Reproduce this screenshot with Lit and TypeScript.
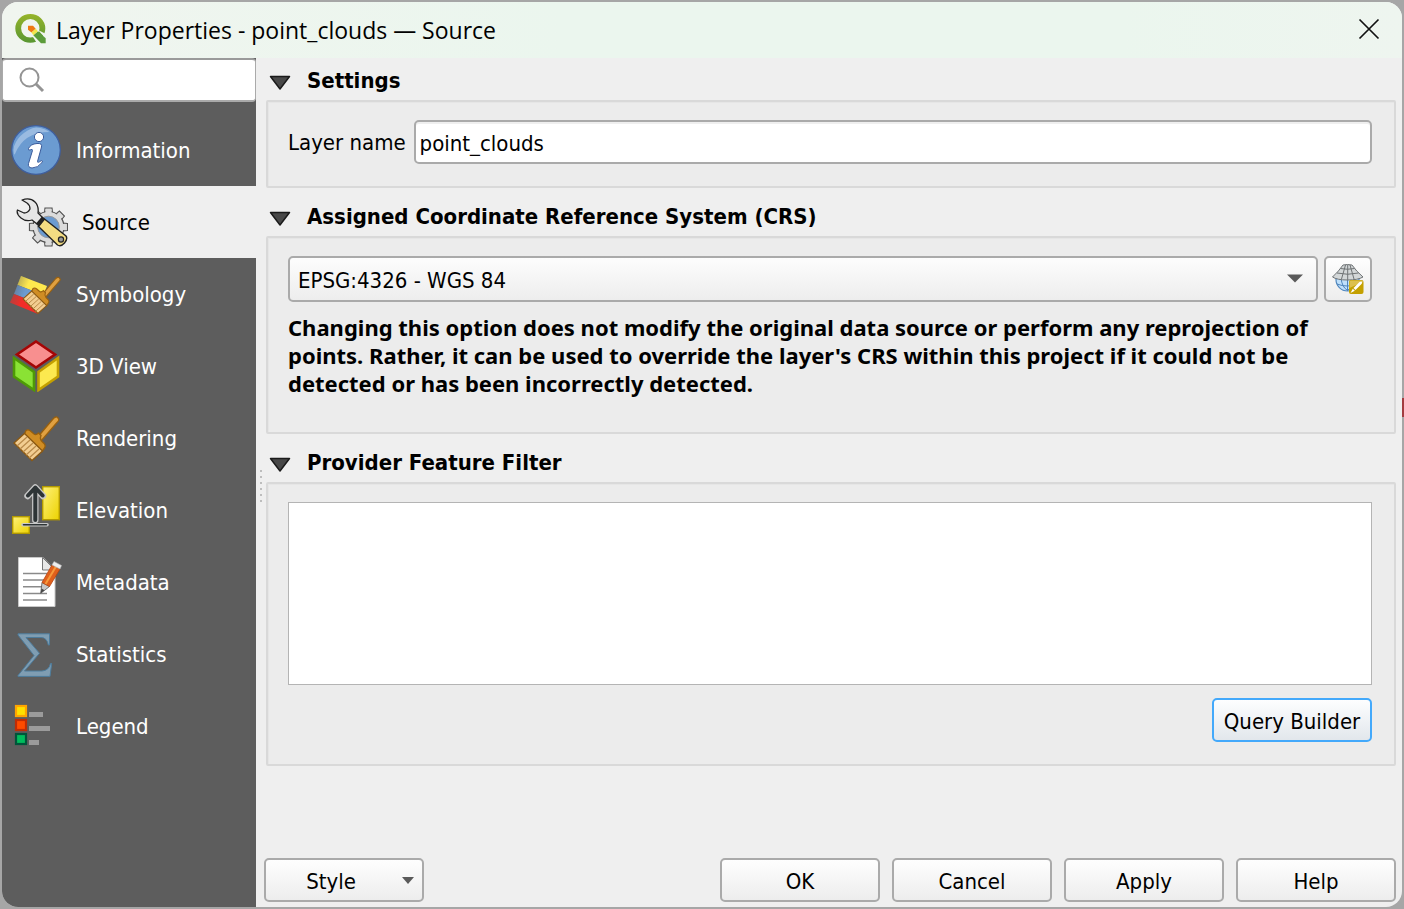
import { LitElement, html, svg, css } from "lit";
import { customElement, property, state } from "lit/decorators.js";
import { classMap } from "lit/directives/class-map.js";

const brush = svg`
  <path d="M26 27 L43 7 Q46 3.500 48 6 Q50 8 47 10.500 L31 29 Z" fill="#e0a040" stroke="#98600f" stroke-width="1.300"/>
  <path d="M14.500 22 L16 18.500 Q18 17 20.500 19 L24 22 Q26 23.500 28.500 21 L31 23.500 Q29.500 26.500 31.500 29 L34.500 32 Q36 34 34.500 36 L32 39.500 Z" fill="#d08d24" stroke="#98600f" stroke-width="1.300"/>
  <path d="M14.500 21.500 L32.500 39 L22 48.500 L4 31 Z" fill="#f2cd91" stroke="#8a5812" stroke-width="1.300"/>
  <path d="M17 25 L7 34 M20 28 L10 37 M23 31 L13 40 M26 34 L16 43 M29 37 L19 46" stroke="#b98a4a" stroke-width="1.200" fill="none"/>`;

const teeth = [0, 45, 90, 135, 180, 225, 270, 315];

const icons = {
  information: svg`
    <defs><clipPath id="disc"><circle cx="26" cy="26" r="22.500"/></clipPath></defs>
    <circle cx="26" cy="26" r="24.300" fill="#6b9bd1" stroke="#3f5f9e" stroke-width="1.300"/>
    <path d="M2 32 Q4 8 30 2 L42 8 Q14 7 5 30 Z" fill="#a9c6e6" opacity=".75" clip-path="url(#disc)"/>
    <g fill="#fff" stroke="#3b5c9c" stroke-width="1">
      <circle cx="29" cy="13" r="4.600"/>
      <path d="M18.500 24.500 Q20.500 20 27 19.500 Q32.500 19 31.500 23 L27.500 37.500 Q27.300 39.500 31.500 36.500 Q33 36.500 32 38.500 Q28 44 22 44 Q17.500 43.500 18.500 39.500 L22.500 26.500 Q22.800 24.500 20 26 Q18 26.500 18.500 24.500 Z"/>
    </g>`,
  source: svg`
    <g fill="#dcdcdc" stroke="#555" stroke-width="1.200">
      ${teeth.map((a) => svg`<path d="M28.500 17 L29 12 H36 L36.500 17" transform=${`rotate(${a} 32.500 31)`}/>`)}
      <circle cx="32.500" cy="31" r="15.500"/>
    </g>
    ${teeth.map((a) => svg`<path d="M29.500 18 V13 H35.500 V18 Z" fill="#dcdcdc" transform=${`rotate(${a} 32.500 31)`}/>`)}
    <circle cx="32.500" cy="31" r="10.800" fill="#6b9bd1" stroke="#999" stroke-width="1"/>
    <path d="M6 4 Q14 1 19 6 Q23 10 22 17 L27 22 L21 28 L16 24 Q10 26 5 22 Q0 18 1.500 14 L8 17 Q12 17 14 13 Q14 9 11 7 Z" fill="#e6e6e6" stroke="#222" stroke-width="1.300" stroke-linejoin="round"/>
    <path d="M26 20.500 L29 23 L22.500 30.500 L20 27.500 Z" fill="#222"/>
    <path d="M28.500 23 L50 40 Q52 43 48.500 47 Q45 51 41.500 49 L22.500 30.500 Z" fill="#f3dc82" stroke="#222" stroke-width="1.400"/>
    <circle cx="45" cy="43.500" r="2.600" fill="#999" stroke="#222" stroke-width="1.200"/>`,
  symbology: svg`
    <defs><linearGradient id="fade" x1="0" y1="0" x2="1" y2="0.400"><stop offset="0" stop-color="#5d5d5d" stop-opacity=".75"/><stop offset=".5" stop-color="#5d5d5d" stop-opacity="0"/></linearGradient></defs>
    <path d="M11 8 L37 18 L33.500 27 L7.500 17 Z" fill="#ffe94e"/>
    <path d="M7.500 17 L33.500 27 L30 36 L4 26 Z" fill="#6b9bd1"/>
    <path d="M4 26 L32 37 L28 46 L0 34.500 Z" fill="#f22c28"/>
    <path d="M11 8 L37 18 L28 46 L0 34.500 Z" fill="url(#fade)"/>
    <g transform="translate(9.700 5.200) scale(.83)">${brush}</g>`,
  view3d: svg`
    <g stroke-width="2.600">
      <path d="M26 1.500 L45 14.500 L26 27.500 L7 14.500 Z" fill="#f88f8f" stroke="#a50505"/>
      <path d="M4 18 L24 32 V50 L4 36.500 Z" fill="#8ae234" stroke="#4e9a06"/>
      <path d="M48 18 L28.500 32 V50 L48 36.500 Z" fill="#fce94f" stroke="#c4a000"/>
    </g>`,
  rendering: brush,
  elevation: svg`
    <defs><linearGradient id="gold" x1="0" y1="0" x2="1" y2="1"><stop offset="0" stop-color="#fff27a"/><stop offset="1" stop-color="#ecd200"/></linearGradient></defs>
    <g fill="url(#gold)" stroke="#b39a00" stroke-width="1.400">
      <rect x="32.700" y="2.700" width="16.600" height="33"/>
      <rect x="2.700" y="32.700" width="16.600" height="16.600"/>
    </g>
    <g fill="none" stroke-linecap="round" stroke-linejoin="round">
      <path d="M13 40.700 H37" stroke="#c8c8c8" stroke-width="3.600"/>
      <path d="M13.500 40.700 H36.500" stroke="#2e3436" stroke-width="1.600"/>
      <path d="M25.300 36 V4 M17.500 12 L25.300 3.500 L33 12" stroke="#c8c8c8" stroke-width="6.400"/>
      <path d="M25.300 36 V4 M18 11.500 L25.300 3.500 L32.600 11.500" stroke="#2e3436" stroke-width="4"/>
    </g>`,
  metadata: svg`
    <path d="M8.500 1.500 H33 L45 14 V50.500 H8.500 Z" fill="#fff" stroke="#c8c8c8"/>
    <path d="M32.500 1.500 V14 H45 Z" fill="#e8e8e8" stroke="#777" stroke-width="1"/>
    <path d="M13 17.500 H37 M13 24 H37 M13 30.700 H37 M13 37.500 H37 M13 44 H37" stroke="#8a8a8a" stroke-width="1.600"/>
    <path d="M30.700 37.300 L32 26.500 L39.500 30.500 Z" fill="#c8c8c8" stroke="#555" stroke-width=".8"/>
    <path d="M30.700 37.300 L31.500 32.500 L34.500 34.300 Z" fill="#444"/>
    <path d="M32 26.500 L42 9 L50 13 L39.500 30.500 Z" fill="#e0601c" stroke="#b5430e" stroke-width=".8"/>
    <path d="M35.500 28 L46 10.500" stroke="#f79a3c" stroke-width="2"/>
    <path d="M42 9 L44 5.500 L51.500 9.500 L50 13 Z" fill="#eee" stroke="#b5b5b5" stroke-width=".6"/>`,
  statistics: svg`
    <path d="M8 5.800 H39.500 V17 H38.300 Q37 9.500 31 9.500 H16 L29.500 25.300 L14.500 43 H32 Q39 42.500 40.500 35.500 H41.700 L40 48.400 H8 V47.500 L24 27.500 L8 7 Z" fill="#7f9db2" stroke="#4d7c9c" stroke-width="1"/>`,
  legend: svg`
    <g stroke-width="2.200">
      <rect x="6" y="6" width="10" height="10" fill="#ffe100" stroke="#ffa500"/>
      <rect x="6" y="20" width="10" height="10" fill="#ff4b00" stroke="#bf2c05"/>
      <rect x="6" y="34" width="10" height="10" fill="#00bd5c" stroke="#00553a"/>
    </g>
    <path d="M19 12 H33 V17 H19 Z M19 26 H40 V31 H19 Z M19 40 H29 V45 H19 Z" fill="#9b9b9b"/>`,
};

type IconName = keyof typeof icons;

const pages: { label: string; icon: IconName }[] = [
  { label: "Information", icon: "information" },
  { label: "Source", icon: "source" },
  { label: "Symbology", icon: "symbology" },
  { label: "3D View", icon: "view3d" },
  { label: "Rendering", icon: "rendering" },
  { label: "Elevation", icon: "elevation" },
  { label: "Metadata", icon: "metadata" },
  { label: "Statistics", icon: "statistics" },
  { label: "Legend", icon: "legend" },
];

@customElement("group-box")
class GroupBox extends LitElement {
  @property() heading = "";
  @state() private open = true;

  static styles = css`
    :host { display: block; }
    .heading { margin: 0; font-size: inherit; line-height: 40px; }
    .toggle {
      display: flex; align-items: center; gap: 16px; height: 40px; padding: 2px 0 0 3px; border: 0;
      background: none; font: inherit; font-weight: 700; line-height: 28px; color: #000;
    }
    .arrow { width: 22px; height: 16px; margin-top: 4px; }
    .closed { transform: rotate(-90deg); }
    .frame {
      border: 2px solid #d9d9d9; border-radius: 2px; background: #ececec;
      box-shadow: inset 1px 1px 0 #e6e6e6; padding: 18px 22px 22px 20px;
    }
  `;

  render() {
    return html`
      <h2 class="heading">
        <button class="toggle" aria-expanded=${this.open} @click=${() => (this.open = !this.open)}>
          <svg class=${classMap({ arrow: true, closed: !this.open })} viewBox="0 0 22 16" aria-hidden="true">
            <path d="M1.500 1.500 H20.500 L11 14 Z" fill="#484848" stroke="#1a1a1a" stroke-width="1.500" stroke-linejoin="round"/>
          </svg>
          <span>${this.heading}</span>
        </button>
      </h2>
      ${this.open ? html`<div class="frame"><slot></slot></div>` : null}
    `;
  }
}

@customElement("app-root")
class AppRoot extends LitElement {
  @state() private page = "Source";

  static styles = css`
    * { box-sizing: border-box; }
    :host {
      display: flex; min-height: 100vh; box-sizing: border-box; padding: 2px;
      background: linear-gradient(#a33c40, #a33c40) right 398px / 2px 19px no-repeat, #a6a6a6;
      font: 22px/28px "DejaVu Sans Condensed", "Noto Sans", sans-serif; color: #000;
    }
    .window {
      flex: 1; display: flex; flex-direction: column; overflow: hidden;
      border-radius: 16px; background: #efefef;
    }
    .titlebar {
      display: flex; align-items: center; gap: 9px; height: 56px; padding: 0 18px 2px 13px;
      background: linear-gradient(90deg, #f0f5ef, #ebf6ee 40%, #ebf6ee 80%, #eef5ef);
      font-family: "Open Sans", sans-serif;
    }
    .logo { width: 32px; height: 32px; }
    .title { flex: 1; margin: 0; font-size: 23px; font-weight: 400; line-height: 32px; padding-top: 2px; }
    .close { display: grid; place-items: center; width: 30px; height: 30px; padding: 0; border: 0; background: none; }
    .body { flex: 1; display: flex; }

    .sidebar { width: 254px; flex: none; background: #5d5d5d; }
    .search {
      display: flex; align-items: center; height: 44px; padding-left: 16px;
      border: 2px solid #aaa; border-width: 2px 1px; border-radius: 4px; background: #fff;
      border-top-color: #9a9a9a;
    }
    .search-input { flex: 1; min-width: 0; border: 0; outline: 0; background: none; font: inherit; padding: 0 8px; }
    .nav { padding-top: 12px; }
    .item {
      display: flex; align-items: center; gap: 14px; width: 100%; height: 72px;
      padding: 0 8px; border: 0; background: none; color: #fff; font: inherit; text-align: left;
    }
    .selected { background: #efefef; color: #000; padding-left: 14px; }
    .icon { width: 52px; height: 52px; flex: none; }
    .text { padding-top: 2px; }

    .splitter { width: 10px; flex: none; display: flex; align-items: center; padding: 6px 0 0 4px; }
    .grip { width: 2px; height: 32px; background: repeating-linear-gradient(#bdbdbd 0 2px, transparent 2px 6px); }

    .main { flex: 1; min-width: 0; display: flex; flex-direction: column; padding: 2px 6px 5px 0; }
    .groups { flex: 1; display: flex; flex-direction: column; gap: 8px; }
    .row { display: flex; align-items: center; gap: 8px; }
    .tight { gap: 6px; }
    .field {
      flex: 1; min-width: 0; height: 44px; padding: 2px 4px 0; font: inherit; color: #000;
      border: 2px solid #aaa; border-radius: 5px; background: #fff; box-shadow: inset 0 2px 0 #efefef;
    }
    .combo { position: relative; flex: 1; min-width: 0; display: flex; }
    .select {
      flex: 1; min-width: 0; height: 46px; padding: 4px 40px 0 8px; appearance: none; font: inherit; color: #000;
      border: 2px solid #aaa; border-radius: 5px; background: linear-gradient(#fdfdfd, #ededed);
    }
    .combo-arrow { position: absolute; right: 15px; top: 18px; width: 16px; height: 9px; pointer-events: none; }
    .note { margin: 11px 0 13px; font-family: "Noto Sans", sans-serif; font-weight: 700; }
    .editor {
      display: block; width: 100%; height: 183px; margin-bottom: 13px; padding: 4px; resize: none;
      border: 1px solid #b4b4b4; background: #fff; font: inherit;
    }
    .button {
      display: flex; align-items: center; justify-content: center; width: 160px; height: 44px; padding: 4px 0 0;
      border: 2px solid #aaa; border-radius: 5px; background: linear-gradient(#fefefe, #ededed);
      font: inherit; color: #000;
    }
    .square { width: 48px; height: 46px; padding: 0; }
    .default { border-color: #43a9fb; background: linear-gradient(#fdfeff, #e2e7ec); }
    .end { display: flex; justify-content: flex-end; }
    .footer { display: flex; gap: 12px; margin-left: -2px; padding-top: 16px; }
    .menu { justify-content: flex-end; gap: 46px; padding-right: 8px; }
    .menu-arrow { width: 12px; height: 7px; margin-bottom: 4px; }
    .push { margin-left: auto; }
  `;

  render() {
    return html`
      <div class="window" role="dialog" aria-labelledby="title">
        <header class="titlebar">
          <svg class="logo" viewBox="0 0 32 32" aria-hidden="true">
            <defs><linearGradient id="green" x1="0" y1="0" x2="0" y2="1"><stop offset="0" stop-color="#96b42a"/><stop offset="1" stop-color="#589632"/></linearGradient></defs>
            <path fill-rule="evenodd" d="M15.300 1 A15 14.400 0 1 0 15.300 29.800 A15 14.400 0 1 0 15.300 1 Z M15.300 6 A9.200 9.300 0 1 1 15.300 24.600 A9.200 9.300 0 1 1 15.300 6 Z" fill="url(#green)"/>
            <path d="M16 21 L23.500 24 L26 31 L22.500 31 Z M23 17 L31 21 V26 Z" fill="#eff5ef"/>
            <path d="M18.300 22.300 L23 18.200 L30.700 25.300 V30.300 H26 Z" fill="#5b9c3a"/>
            <path d="M13 12.700 H18 L20.700 15.800 L16.500 19.500 L13 16.800 Z" fill="#ee7913"/>
            <path d="M16.500 19.500 L20.700 15.800 L23 18.200 L18.300 22.300 Z" fill="#f0e64a"/>
          </svg>
          <h1 class="title" id="title">Layer Properties - point_clouds — Source</h1>
          <button class="close" aria-label="Close">
            <svg width="22" height="22" viewBox="0 0 22 22" aria-hidden="true"><path d="M1.500 1.500 L20.500 20.500 M20.500 1.500 L1.500 20.500" stroke="#111" stroke-width="1.700"/></svg>
          </button>
        </header>
        <div class="body">
          <aside class="sidebar">
            <div class="search">
              <svg width="26" height="26" viewBox="0 0 26 26" fill="none" stroke="#949494" aria-hidden="true">
                <circle cx="10.500" cy="10.500" r="9" stroke-width="2"/><path d="M17 17 L24 24" stroke-width="3"/>
              </svg>
              <input class="search-input" type="search" aria-label="Search options">
            </div>
            <nav class="nav">
              ${pages.map((p) => html`
                <button class=${classMap({ item: true, selected: p.label === this.page })} @click=${() => (this.page = p.label)}>
                  <svg class="icon" viewBox="0 0 52 52" aria-hidden="true">${icons[p.icon]}</svg>
                  <span class="text">${p.label}</span>
                </button>`)}
            </nav>
          </aside>
          <div class="splitter"><div class="grip"></div></div>
          <main class="main">
            <div class="groups">
              <group-box heading="Settings">
                <div class="row">
                  <label class="text" for="name">Layer name</label>
                  <input class="field" id="name" type="text" value="point_clouds">
                </div>
              </group-box>
              <group-box heading="Assigned Coordinate Reference System (CRS)">
                <div class="row tight">
                  <div class="combo">
                    <select class="select" aria-label="Coordinate reference system"><option>EPSG:4326 - WGS 84</option></select>
                    <svg class="combo-arrow" viewBox="0 0 16 9" aria-hidden="true"><path d="M0 0.500 H16 L8 8.500 Z" fill="#5a5a5a"/></svg>
                  </div>
                  <button class="button square" aria-label="Select CRS">
                    <svg width="32" height="32" viewBox="0 0 32 32" aria-hidden="true">
                      <circle cx="15.500" cy="16.500" r="11.500" fill="#bfe0fb" stroke="#4f86bd" stroke-width="1.200"/>
                      <path d="M15.500 15 V28 M9 15 Q10 24 15 27 M22 15 Q21 24 16 27 M5 21 Q15 25 26 21" fill="none" stroke="#4f86bd" stroke-width="1"/>
                      <path d="M11 2 Q15.500 1 20 2 Q24 8 31 14 Q26 17 15.500 17 Q5 17 0.500 14 Q7 8 11 2 Z" fill="#d3d7d8" stroke="#6f7375" stroke-width="1"/>
                      <path d="M8.500 5.500 Q15.500 7 22.500 5.500 M5 10 Q15.500 12.500 26.500 10 M13.500 2 L9.500 16 M18 2 L22 16 M15.700 2 V17" fill="none" stroke="#6f7375" stroke-width="1"/>
                      <rect x="17" y="17" width="14.500" height="14" rx="2" fill="#c4a000"/>
                      <path d="M17.500 25 V19 Q17.500 17.500 19 17.500 H30 Q31 17.500 31 19 Z" fill="#dcc04e"/>
                      <path d="M29.500 18.500 Q31 19.500 29.500 21 L23.500 27 L21.500 25 L27.500 19 Z M20.800 25.700 L22.800 27.700 L18.500 30 Z" fill="#fff"/>
                    </svg>
                  </button>
                </div>
                <p class="note">Changing this option does not modify the original data source or perform any reprojection of points. Rather, it can be used to override the layer's CRS within this project if it could not be detected or has been incorrectly detected.</p>
              </group-box>
              <group-box heading="Provider Feature Filter">
                <textarea class="editor" aria-label="Provider feature filter" readonly></textarea>
                <div class="end"><button class="button default">Query Builder</button></div>
              </group-box>
            </div>
            <footer class="footer">
              <button class="button menu">
                Style
                <svg class="menu-arrow" viewBox="0 0 12 7" aria-hidden="true"><path d="M0 0 H12 L6 7 Z" fill="#5a5a5a"/></svg>
              </button>
              <button class="button push">OK</button>
              <button class="button">Cancel</button>
              <button class="button">Apply</button>
              <button class="button">Help</button>
            </footer>
          </main>
        </div>
      </div>
    `;
  }
}
